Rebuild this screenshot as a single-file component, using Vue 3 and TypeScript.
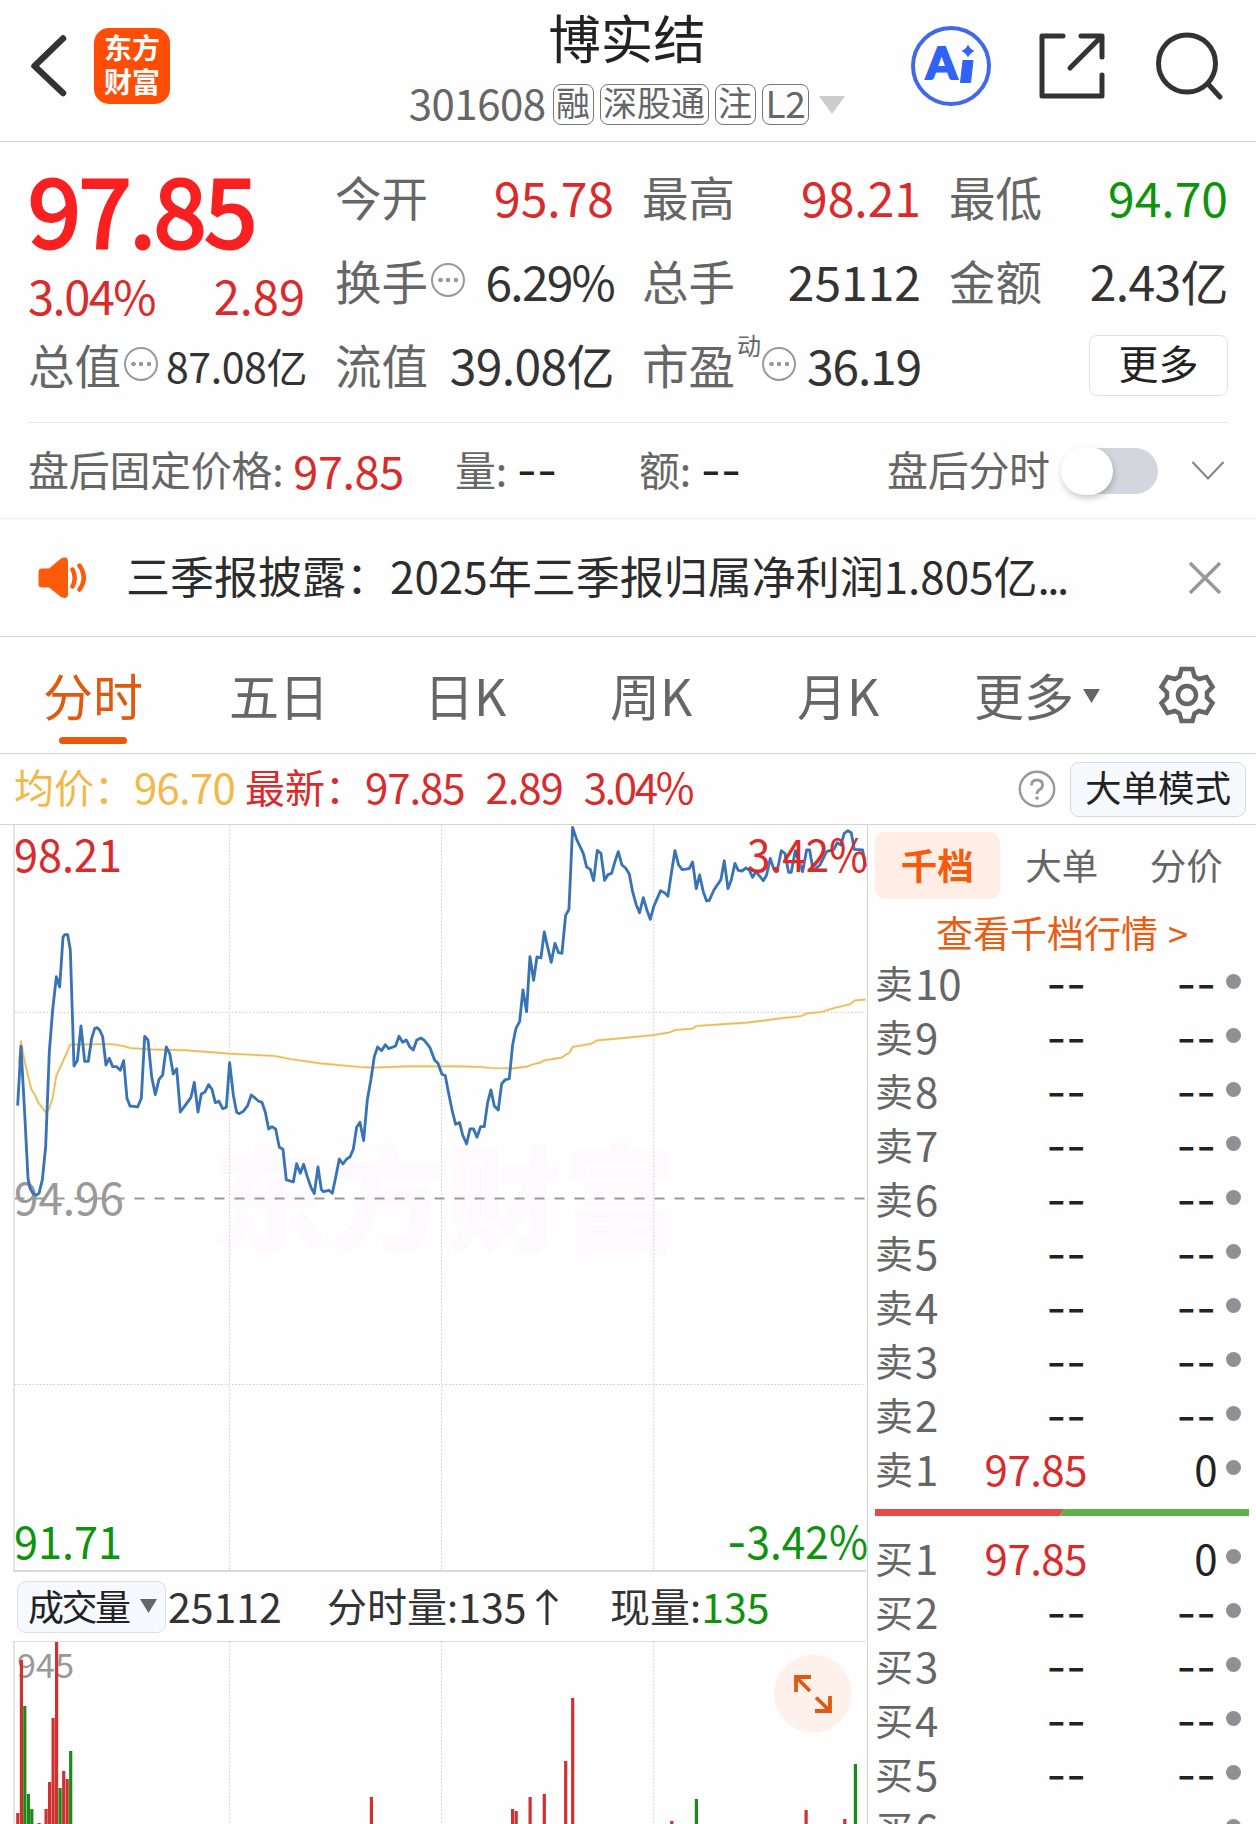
<script setup lang="ts">
interface Level {
  name: string
  price: string
  volume: string
}
type Bar = [x: number, top: number, up: 0 | 1]

const tags = ['融', '深股通', '注', 'L2']

const empty = (name: string): Level => ({ name, price: '--', volume: '--' })
const sells: Level[] = [
  ...[10, 9, 8, 7, 6, 5, 4, 3, 2].map((n) => empty(`卖${n}`)),
  { name: '卖1', price: '97.85', volume: '0' },
]
const buys: Level[] = [
  { name: '买1', price: '97.85', volume: '0' },
  ...[2, 3, 4, 5, 6].map((n) => empty(`买${n}`)),
]

// Series are sampled on a grid three times finer than the chart.
const priceLine =
  '53,887 63,709 74,909 84,1105 90,1135 100,1152 108,1156 117,1150 127,1110 137,1010 148,725 158,600 169,500 179,531 189,382 194,374 203,374 211,420 222,768 232,752 243,648 254,754 265,754 275,685 284,656 291,653 299,660 308,680 318,765 328,745 338,770 350,770 361,781 371,752 381,865 390,888 402,889 413,891 424,865 434,679 444,690 455,800 466,854 477,808 488,795 499,711 509,730 520,792 530,776 541,906 553,890 573,862 583,817 594,906 604,852 615,846 626,824 636,838 646,878 657,874 668,896 679,892 689,758 700,855 710,907 718,911 730,904 743,887 754,855 765,864 775,873 786,877 796,907 806,957 816,950 827,957 838,1012 849,1018 859,1110 880,1116 890,1061 901,1090 911,1063 922,1100 933,1132 943,1151 954,1071 964,1138 970,1145 987,1141 997,1150 1008,1098 1018,1047 1029,1062 1040,1047 1050,1041 1060,1018 1070,952 1080,937 1091,992 1102,870 1113,808 1123,740 1133,711 1145,722 1156,704 1166,716 1187,708 1197,679 1208,697 1219,690 1229,710 1240,720 1250,691 1262,684 1272,690 1285,706 1290,713 1304,750 1314,760 1326,793 1336,797 1347,855 1357,903 1367,943 1379,938 1388,975 1400,1002 1410,957 1421,957 1431,982 1442,950 1453,950 1463,878 1473,840 1483,888 1495,900 1505,822 1515,810 1528,806 1538,705 1548,655 1559,635 1569,540 1580,605 1590,440 1601,511 1611,441 1623,444 1633,366 1644,415 1654,457 1665,400 1676,428 1686,430 1697,316 1707,298 1718,52 1730,88 1750,130 1760,171 1771,178 1781,212 1792,121 1803,130 1814,211 1824,194 1835,190 1845,155 1855,125 1866,165 1877,174 1888,192 1898,245 1909,285 1919,308 1930,263 1941,300 1951,328 1962,288 1982,242 1994,248 2004,259 2015,185 2025,122 2036,165 2047,179 2068,176 2078,156 2089,236 2099,195 2110,245 2120,273 2128,271 2142,240 2163,209 2173,152 2184,236 2194,210 2205,160 2215,181 2226,183 2238,174 2248,180 2258,202 2268,185 2290,212 2300,195 2311,145 2322,178 2333,178 2344,122 2355,130 2366,187 2374,187 2386,122 2396,150 2408,185 2420,120 2429,120 2440,182 2460,165 2480,125 2502,118 2512,98 2523,105 2533,70 2544,62 2554,68 2563,118 2588,120 2597,170'
const averageLine =
  '57,760 63,693 74,755 84,797 94,838 105,855 116,880 127,893 138,908 148,895 158,865 169,797 190,752 211,704 330,702 370,708 390,714 450,718 560,721 689,731 825,738 870,747 960,760 1080,771 1120,773 1220,769 1380,769 1445,771 1470,774 1540,775 1580,770 1600,763 1620,758 1633,751 1685,743 1700,733 1708,729 1718,711 1775,701 1792,691 1860,685 1962,675 2010,667 2025,660 2078,656 2089,648 2160,643 2240,638 2290,632 2340,625 2405,618 2420,610 2465,606 2500,595 2550,583 2565,571 2597,569'

const bars: Bar[] = [
  [17.7, 1813, 1], [21.3, 1660, 1], [24.7, 1706, 0], [28.3, 1794, 0], [31.7, 1809, 0],
  [39, 1823, 1], [46, 1809, 1], [49.5, 1782, 1], [53, 1718, 1], [56.5, 1642, 1],
  [60, 1788, 0], [63.6, 1771, 1], [67.1, 1779, 1], [70.6, 1751, 0], [371.3, 1797, 1],
  [512.5, 1809, 1], [516.1, 1811, 1], [530, 1797, 1], [544.2, 1794, 1], [565.6, 1761, 1],
  [572.6, 1698, 1], [671.7, 1821, 1], [696.3, 1799, 0], [806, 1810, 1], [844.7, 1819, 1],
  [855.3, 1764, 0],
]
const gridX = [229.5, 441.5, 653.7]
</script>

<template>
  <div class="page">
    <header class="top">
      <div class="side">
        <svg class="back" width="40" height="70" viewBox="28 31 40 70">
          <path d="M63 38.500 34.500 66 63 93" fill="none" stroke="#333" stroke-width="6.500" stroke-linecap="round" stroke-linejoin="round" />
        </svg>
        <div class="logo"><span>东方</span><span>财富</span></div>
      </div>
      <div class="title">
        <h1>博实结</h1>
        <div class="code">
          <span class="num">301608</span>
          <i v-for="t in tags" :key="t" :class="{ latin: t === 'L2' }">{{ t }}</i>
          <svg width="26" height="18" viewBox="0 0 26 18"><path d="M0 0H26L13 18Z" fill="#ccc" /></svg>
        </div>
      </div>
      <div class="actions">
        <svg width="80" height="82" viewBox="911 25 80 82">
          <circle cx="951" cy="66" r="38" fill="none" stroke="#4069e8" stroke-width="4" />
          <text x="926" y="79" font-size="44" font-weight="900" textLength="31" lengthAdjust="spacingAndGlyphs" fill="#2f62f5" stroke="#2f62f5" stroke-width="2" font-family="Lato, sans-serif">A</text>
          <path d="M963 60.500H973L970.500 82.500H960.500Z" fill="#2f62f5" stroke="#2f62f5" stroke-linejoin="round" />
          <path d="M968 44.500Q969.800 49 974.500 51 969.800 53 968 57.500 966.200 53 961.500 51 966.200 49 968 44.500Z" fill="#2f62f5" />
        </svg>
        <svg width="68" height="68" viewBox="1038 32 68 68" fill="none" stroke="#333" stroke-width="5" stroke-linecap="round" stroke-linejoin="round">
          <path d="M1063 36H1042V96H1102V75M1081 36H1102V57M1100 38 1070 68" />
        </svg>
        <svg width="70" height="70" viewBox="1154 30 70 70" fill="none" stroke="#333" stroke-width="5" stroke-linecap="round">
          <circle cx="1187" cy="62.500" r="28.500" /><path d="M1209 84 1220 96" />
        </svg>
      </div>
    </header>

    <section class="quote">
      <div class="col first">
        <div class="last">97.85</div>
        <div class="change"><span class="rate">3.04%</span><span>2.89</span></div>
        <div class="cell"><label>总值</label><b class="more" /><span class="small">87.08亿</span></div>
      </div>
      <div class="col">
        <div class="cell"><label>今开</label><span class="up">95.78</span></div>
        <div class="cell"><label>换手</label><b class="more" /><span class="pct">6.29%</span></div>
        <div class="cell"><label>流值</label><span class="tight">39.08亿</span></div>
      </div>
      <div class="col">
        <div class="cell"><label>最高</label><span class="up">98.21</span></div>
        <div class="cell"><label>总手</label><span>25112</span></div>
        <div class="cell"><label>市盈<sup>动</sup></label><b class="more pe" /><span class="ratio-pe">36.19</span></div>
      </div>
      <div class="col">
        <div class="cell"><label>最低</label><span class="down">94.70</span></div>
        <div class="cell"><label>金额</label><span class="tight">2.43亿</span></div>
        <div class="cell end"><button class="btn-more">更多</button></div>
      </div>
    </section>

    <section class="after">
      <div class="item fixed"><label>盘后固定价格:</label><span class="up">97.85</span></div>
      <div class="item vol"><label>量:</label><span class="dash">--</span></div>
      <div class="item amt"><label>额:</label><span class="dash">--</span></div>
      <div class="item toggle-item"><label>盘后分时</label><span class="toggle"><i /></span>
        <svg width="34" height="22" viewBox="0 0 34 22"><path d="M1.500 2 17 18.500 32.500 2" fill="none" stroke="#888" stroke-width="2.200" /></svg>
      </div>
    </section>

    <section class="notice">
      <svg width="52" height="44" viewBox="37 555 52 44">
        <path d="M38.500 571Q38.500 567.500 42 567.500H49L61 557.500Q68 554.500 68 561V593Q68 599 61 596L49 586.500H42Q38.500 586.500 38.500 583Z" fill="#fd5a0a" />
        <path d="M72.500 568.500Q77 577 72.500 585.500M79.500 564.500Q88 577 79.500 588.500" fill="none" stroke="#fd5a0a" stroke-width="4.500" stroke-linecap="round" />
      </svg>
      <p>三季报披露：<span>2025</span>年三季报归属净利润<span>1.805</span>亿<em>...</em></p>
      <svg class="close" width="36" height="36" viewBox="0 0 36 36"><path d="M3 3 33 33M33 3 3 33" stroke="#999" stroke-width="3.500" /></svg>
    </section>

    <nav class="tabs">
      <a class="on">分时</a><a>五日</a><a>日K</a><a>周K</a><a>月K</a>
      <a class="drop">更多<svg width="17" height="14" viewBox="0 0 17 14"><path d="M0 0H17L8.500 14Z" fill="#666" /></svg></a>
      <svg class="gear" width="60" height="60" viewBox="-30 -30 60 60" fill="none" stroke="#666">
        <path stroke-width="4.500" stroke-linejoin="miter" d="M-5.500 -26H5.500L7.500 -18.500L12 -16L19.500 -18L25.500 -8L20 -2.500V2.500L25.500 8L19.500 18L12 16L7.500 18.500L5.500 26H-5.500L-7.500 18.500L-12 16L-19.500 18L-25.500 8L-20 2.500V-2.500L-25.500 -8L-19.500 -18L-12 -16L-7.500 -18.500Z" />
        <circle r="9" stroke-width="4.500" />
      </svg>
    </nav>

    <section class="info">
      <span class="avg">均价：<b>96.70</b></span>
      <span class="now">最新：<b>97.85</b><b>2.89</b><b class="rate">3.04%</b></span>
      <svg width="38" height="38" viewBox="0 0 38 38" fill="none" stroke="#999">
        <circle cx="19" cy="19" r="17.200" stroke-width="2.400" />
        <path d="M13.500 15.500Q13.500 10 19 10 24.500 10 24.500 15 24.500 18 21.500 19.800 19 21.200 19 24" stroke-width="2.800" />
        <circle cx="19" cy="28" r="1.800" fill="#999" stroke="none" />
      </svg>
      <button>大单模式</button>
    </section>

    <main class="main">
      <div class="charts">
        <svg width="868" height="747" viewBox="0 825 868 747" class="plot">
          <text class="mark" x="212" y="1243" textLength="466">东方财富</text>
          <g stroke="#ccc" stroke-dasharray="1.500 2">
            <path v-for="x in gridX" :key="x" :d="`M${x} 826V1570`" />
            <path d="M15 1012.500H866M15 1384.500H866" />
          </g>
          <path d="M14.500 1198.500H866" stroke="#999" stroke-width="2" stroke-dasharray="10 10" />
          <text x="14" y="1214.500" fill="#999" textLength="110" lengthAdjust="spacingAndGlyphs">94.96</text>
          <g transform="translate(0 810) scale(0.3333)" fill="none" stroke-linejoin="round">
            <polyline :points="averageLine" stroke="#ffe9a8" stroke-width="9" opacity="0.600" />
            <polyline :points="averageLine" stroke="#e8ba62" stroke-width="5" />
            <polyline :points="priceLine" stroke="#3873b5" stroke-width="8.500" />
          </g>
          <text x="14" y="871.500" fill="#d92b2b" textLength="108" lengthAdjust="spacingAndGlyphs">98.21</text>
          <text x="747" y="871.500" fill="#d92b2b" textLength="121" lengthAdjust="spacingAndGlyphs">3.42%</text>
          <text x="14" y="1558.500" fill="#0f930f" textLength="108" lengthAdjust="spacingAndGlyphs">91.71</text>
          <text x="727" y="1558.500" fill="#0f930f" textLength="141" lengthAdjust="spacingAndGlyphs"><tspan class="minus">-</tspan>3.42%</text>
          <path d="M14 825V1571" stroke="#ddd" stroke-width="1.500" />
          <path d="M867.500 825V1572" stroke="#d0d0d5" />
          <path d="M13 1571H866" stroke="#d9d9d9" stroke-width="2" />
        </svg>
        <div class="volume">
          <button>成交量<svg width="17" height="14" viewBox="0 0 17 14"><path d="M0 0H17L8.500 14Z" fill="#666" /></svg></button>
          <span class="total">25112</span>
          <span class="minute">分时量:<b>135</b><svg width="24" height="38" viewBox="0 0 24 38"><path d="M12 37V3M2 13 12 3 22 13" fill="none" stroke="#333" stroke-width="3" /></svg></span>
          <span class="current">现量:<b>135</b></span>
        </div>
        <svg width="868" height="183" viewBox="0 1641 868 183" class="plot">
          <path v-for="x in gridX" :key="x" :d="`M${x} 1642V1824`" stroke="#ccc" stroke-dasharray="1.500 2" />
          <path d="M13 1641.500H866" stroke="#ddd" />
          <path d="M14 1641V1824" stroke="#ddd" stroke-width="1.500" />
          <path d="M867.500 1641V1824" stroke="#d0d0d5" />
          <text x="17" y="1678" class="peak" textLength="57">945</text>
          <rect v-for="[x, top, up] in bars" :key="x" :x="x - 1.500" :y="top" width="3.200" :height="1824 - top" :fill="up ? '#cf3030' : '#178a17'" />
          <circle cx="813" cy="1693.700" r="39" fill="#fef1ec" />
          <path d="M796 1692V1677H811M796.500 1677.500 810 1691M815 1711H830V1696M829.500 1710.500 816 1697.500" fill="none" stroke="#e0590f" stroke-width="3.800" />
        </svg>
      </div>

      <aside class="book">
        <div class="book-tabs"><a class="on">千档</a><a>大单</a><a>分价</a></div>
        <div class="link">查看千档行情<span>&gt;</span></div>
        <div v-for="l in sells" :key="l.name" class="level">
          <label>{{ l.name.slice(0, 1) }}<b>{{ l.name.slice(1) }}</b></label>
          <span :class="l.price === '--' ? 'dash' : 'up'">{{ l.price }}</span>
          <span :class="{ dash: l.volume === '--' }">{{ l.volume }}</span><i />
        </div>
        <svg class="ratio" width="374" height="7" viewBox="0 0 374 7"><path d="M0 0H190L184 7H0Z" fill="#e64a4a" /><path d="M190 0H374V7H184Z" fill="#5db548" /></svg>
        <div v-for="l in buys" :key="l.name" class="level">
          <label>{{ l.name.slice(0, 1) }}<b>{{ l.name.slice(1) }}</b></label>
          <span :class="l.price === '--' ? 'dash' : 'up'">{{ l.price }}</span>
          <span :class="{ dash: l.volume === '--' }">{{ l.volume }}</span><i />
        </div>
      </aside>
    </main>
  </div>
</template>

<style>
body { margin: 0; background: #fff; }
</style>

<style scoped>
* { box-sizing: border-box; }
.page {
  width: 1256px; height: 1824px; overflow: hidden; background: #fefefe; color: #333;
  font-family: "Noto Sans CJK SC", "Noto Sans", sans-serif; white-space: nowrap;
}
svg { display: block; flex: none; }
b, i, em { font-weight: inherit; font-style: normal; }
button { font-family: inherit; color: #222; padding: 0; margin: 0; }
.up { color: #d92b2b; }
.down { color: #0f930f; }

.top { height: 142px; border-bottom: 1px solid #d0d0d0; display: flex; justify-content: space-between; padding: 0 32px 0 28px; }
.side { display: flex; width: 315px; height: 132px; align-items: center; gap: 26px; }
.logo {
  width: 76px; height: 76px; border-radius: 15px; background: #ff4d05; color: #fff; font-weight: 700;
  font-size: 28px; line-height: 34px; display: flex; flex-direction: column; align-items: center; padding-top: 2px;
}
.title { display: flex; flex-direction: column; align-items: center; }
h1 { margin: 0; font-size: 52.500px; line-height: 72px; font-weight: 400; color: #222; height: 84px; }
.code { display: flex; height: 41px; color: #666; gap: 6px; }
.code .num { font-size: 42px; line-height: 35px; letter-spacing: -0.5px; margin-right: 1px; }
.code i { height: 41px; border: 1px solid #777; border-radius: 8px; font-size: 34px; line-height: 34px; padding: 0 2.500px; }
.code .latin { font-size: 37px; padding: 0 3px; letter-spacing: -0.5px; }
.code svg { margin: 12px 0 0 4px; }
.actions { display: flex; align-items: center; height: 132px; width: 313px; justify-content: space-between; }

.quote { display: flex; gap: 28px; margin: 0 27px; padding: 14px 0 14px 1px; height: 281px; border-bottom: 1px solid #e8e8e8; }
.col { width: 279px; }
.last { height: 114px; font-size: 95px; line-height: 101px; color: #f82020; letter-spacing: -2px; -webkit-text-stroke: 3px #f82020; }
.change { height: 54px; display: flex; justify-content: space-between; font-size: 47px; line-height: 49px; color: #d92b2b; padding-right: 2px; }
.change .rate { letter-spacing: -1.500px; }
.cell { height: 84px; padding-bottom: 5px; display: flex; align-items: center; font-size: 48px; line-height: 78px; }
.cell > label { font-size: 46.500px; color: #666; display: flex; }
.cell > span { margin-left: auto; }
.cell .small { font-size: 41px; letter-spacing: -0.4px; padding-top: 2px; }
.cell .pct { letter-spacing: -1.800px; }
.cell .tight { letter-spacing: -0.600px; }
.cell .ratio-pe { letter-spacing: -1.200px; }
.cell sup { font-size: 24px; line-height: 30px; margin: 5px 0 0 2px; }
.end { justify-content: flex-end; }
.more {
  width: 34px; height: 34px; border: 2.500px solid #999; border-radius: 50%; margin-left: 3px; flex: none;
  background:
    radial-gradient(circle, #999 2px, transparent 2.600px) -7.500px 0 / 100% 100% no-repeat,
    radial-gradient(circle, #999 2px, transparent 2.600px) 0 0 / 100% 100% no-repeat,
    radial-gradient(circle, #999 2px, transparent 2.600px) 7.500px 0 / 100% 100% no-repeat;
}
.more.pe { margin-left: 1px; }
.btn-more { width: 139px; height: 61px; margin-top: 4px; border: 1px solid #e2e2e2; border-radius: 8px; background: #fff; font-size: 40px; line-height: 53px; padding-bottom: 6px; }

.after { display: flex; height: 96px; border-bottom: 1px solid #ececec; padding-left: 28px; font-size: 41px; line-height: 91px; color: #666; }
.item { display: flex; }
.item label { letter-spacing: -0.3px; }
.item .up { font-size: 45px; margin-left: 10px; letter-spacing: -0.4px; line-height: 93px; }
.item .dash { margin-left: 10px; line-height: 96px; }
.fixed { width: 427px; }
.vol { width: 184px; }
.amt { width: 248px; }
.dash { font-family: Inter, sans-serif; color: #222; }
.item .dash { font-size: 44px; }
.toggle { width: 96px; height: 46px; margin: 25px 0 0 12px; border-radius: 23px; background: #d5d5de; position: relative; flex: none; }
.toggle i { display: block; width: 52px; height: 48px; margin: -1px 0 0 -1px; border-radius: 26px; background: #fff; box-shadow: 1px 3px 6px rgba(0, 0, 0, 0.220); }
.toggle-item svg { margin: 37px 0 0 33px; }

.notice { display: flex; align-items: center; height: 118px; border-bottom: 1px solid #d5d5d5; padding: 0 33px 0 37px; }
.notice p { margin: 0 auto 6px 37px; font-size: 44px; color: #2c2c2c; }
.notice em { letter-spacing: -2.500px; }

.tabs { display: flex; height: 117px; border-bottom: 1px solid #d5d5d5; font-size: 50px; line-height: 114px; color: #666; padding-left: 43px; }
.tabs a { display: flex; position: relative; }
.tabs a:nth-child(1) { width: 186px; }
.tabs a:nth-child(2) { width: 195px; }
.tabs a:nth-child(3) { width: 186px; }
.tabs a:nth-child(4) { width: 187px; }
.tabs a:nth-child(5) { width: 177px; }
.tabs a:nth-child(6) { width: 183px; }
.tabs .on { color: #e0590f; }
.tabs .on::after { content: ""; position: absolute; left: 16px; top: 100px; width: 68px; height: 7px; border-radius: 4px; background: #e85808; }
.drop svg { margin: 52px 0 0 9px; }
.gear { margin-top: 28px; }

.info { display: flex; align-items: center; height: 71px; border-bottom: 1px solid #d5d5d5; padding: 0 10px 0 14px; font-size: 40px; line-height: 60px; }
.info span { display: flex; padding-bottom: 6px; }
.info b { font-size: 42px; letter-spacing: -0.8px; }
.avg { color: #f2b84b; width: 231px; }
.now { color: #d92b2b; }
.now b { margin-right: 21px; letter-spacing: -1.100px; }
.now .rate { letter-spacing: -2.400px; }
.info > svg { margin-left: auto; }
.info button { width: 176px; height: 55px; margin-left: 14px; border: 1px solid #d5d8df; border-radius: 9px; background: #f6f9fe; font-size: 36.500px; line-height: 46px; padding-bottom: 4px; }

.main { display: flex; }
.charts { width: 868px; }
.plot text { font-size: 45px; }
.plot .mark { font-size: 116px; font-weight: 900; fill: #fdf9fd; }
.plot .peak { font-size: 34px; fill: #999; }
.minus { font-family: Inter, sans-serif; }
.volume { display: flex; align-items: center; height: 69px; border-right: 1px solid #d0d0d5; padding-left: 17px; font-size: 40px; line-height: 64px; }
.volume button { display: flex; align-items: center; width: 149px; height: 52px; border: 1px solid #dddde6; border-radius: 9px; background: #f6f9fe; font-size: 36px; letter-spacing: -2.500px; padding: 0 0 4px 10px; line-height: 48px; }
.volume button svg { margin: 3px 0 0 11px; }
.volume span { display: flex; align-items: center; padding-bottom: 4px; }
.volume b, .volume .total { font-size: 41px; }
.total { width: 159px; margin-left: 2px; }
.minute { width: 283px; }
.minute svg { margin: 4px 0 0 9px; }
.current b { color: #0f930f; }

.book { width: 388px; padding: 7px 0 0 7px; }
.book-tabs { display: flex; height: 67px; font-size: 36.500px; line-height: 65px; color: #666; }
.book-tabs a { width: 124.500px; height: 67px; text-align: center; }
.book-tabs .on { background: #ffede6; border-radius: 10px; color: #f65b0b; font-weight: 700; }
.link { height: 58px; padding-left: 61px; font-size: 37px; line-height: 66px; color: #ea5c10; }
.link span { margin-left: 10px; font-size: 36px; }
.level { display: flex; align-items: center; height: 54px; padding-bottom: 5px; font-size: 42px; line-height: 54px; color: #222; }
.level label { width: 100px; color: #666; font-size: 38px; display: flex; }
.level label b { font-size: 42px; margin-left: 2px; }
.level span { width: 112px; text-align: right; letter-spacing: -0.5px; }
.level span + span { width: 130px; }
.level .dash { font-size: 43px; letter-spacing: 0; padding: 5px 1px 0 0; }
.level .up { color: #d92b2b; }
.level i { width: 15px; height: 15px; border-radius: 50%; background: #8f8f96; margin-left: 9px; }
.ratio { margin: 12px 0 16px; }
</style>
